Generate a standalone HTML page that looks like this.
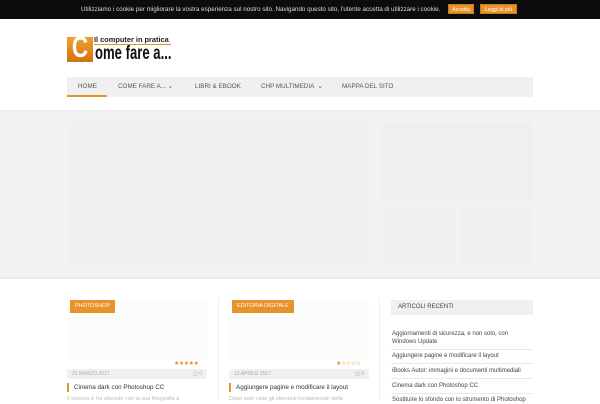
<!DOCTYPE html>
<html><head><meta charset="utf-8"><style>
*{margin:0;padding:0;box-sizing:border-box}
body{width:600px;height:400px;overflow:hidden;background:#fff;font-family:"Liberation Sans",sans-serif;position:relative}
.abs{position:absolute}
.cookie{left:0;top:0;width:600px;height:19px;background:#0c0c0c;color:#ddd;font-size:6.25px;line-height:19px;white-space:nowrap}
.btn{background:#e8922a;color:#fff;font-size:5.3px;height:10px;line-height:10px;top:4px;text-align:center;border:1px solid #c77a1f}
.nav{left:67px;top:77px;width:466px;height:20px;background:#f0f0f0;font-size:6.3px;color:#555}
.nav span{position:absolute;top:0;line-height:20px}
.band{left:0;top:110px;width:600px;height:169px;background:#f2f2f2;border-top:1px solid #eaeaea;border-bottom:2px solid #ebebeb}
.tag{background:#e8922a;color:#fff;font-size:5.5px;height:13px;line-height:13px;padding:0 5px}
.meta{height:10px;background:#f0f0f0;font-size:5px;color:#aaa;line-height:10px;padding-left:5px}
.title{font-size:6.3px;color:#333;border-left:2px solid #e8922a;padding-left:5px;height:9px;line-height:9px}
.side{font-size:6px;color:#444;line-height:8px}
.sep{height:1px;background:#e8e8e8;width:142px}
</style></head><body>
<div class="abs cookie"><span style="position:absolute;left:81px">Utilizziamo i cookie per migliorare la vostra esperienza sul nostro sito. Navigando questo sito, l'utente accetta di utilizzare i cookie.</span></div>
<div class="abs btn" style="left:448px;width:26px">Accetta</div>
<div class="abs btn" style="left:480px;width:37px">Leggi di più</div>

<div class="abs" style="left:67px;top:37px;width:26px;height:25px;background:linear-gradient(#f0a030,#d07510)"></div>
<div class="abs" style="left:67px;top:33px;width:26px;font:bold 30px/30px 'Liberation Sans',sans-serif;color:#fff;text-align:center;transform:scaleX(0.75)">C</div>
<div class="abs" style="left:94px;top:35px;font-size:7.4px;font-weight:bold;color:#222;white-space:nowrap">Il computer in pratica</div>
<div class="abs" style="left:94px;top:44px;width:77px;height:1px;background:#e8922a"></div>
<div class="abs" style="left:95px;top:44px;font:bold 19px/19px 'Liberation Sans',sans-serif;color:#111;transform:scaleX(0.69);transform-origin:left;white-space:nowrap">ome fare a...</div>

<div class="abs nav">
<span style="left:11px">HOME</span>
<span style="left:51px">COME FARE A... &#8964;</span>
<span style="left:128px">LIBRI &amp; EBOOK</span>
<span style="left:194px">CHP MULTIMEDIA &nbsp;&#8964;</span>
<span style="left:275px">MAPPA DEL SITO</span>
<div style="position:absolute;left:0;top:18px;width:40px;height:2px;background:#e8922a"></div>
</div>

<div class="abs band"></div>
<div class="abs" style="left:68px;top:122px;width:302px;height:144px;background:#f0f0f0"></div>
<div class="abs" style="left:382px;top:122px;width:151px;height:79px;background:#efefef"></div>
<div class="abs" style="left:382px;top:206px;width:73px;height:60px;background:#f0f0f0"></div>
<div class="abs" style="left:459px;top:206px;width:74px;height:60px;background:#f0f0f0"></div>

<div class="abs" style="left:67px;top:300px;width:140px;height:60px;background:#fcfcfc"></div>
<div class="abs" style="left:229px;top:300px;width:140px;height:60px;background:#fcfcfc"></div>
<div class="abs" style="left:218px;top:298px;width:1px;height:102px;background:#eee"></div>
<div class="abs" style="left:379px;top:298px;width:1px;height:102px;background:#eee"></div>

<div class="abs tag" style="left:70px;top:300px">PHOTOSHOP</div>
<div class="abs tag" style="left:232px;top:300px">EDITORIA DIGITALE</div>
<div class="abs" style="left:174px;top:360px;font-size:6px;color:#e8922a;letter-spacing:-0.5px">★★★★★</div>
<div class="abs" style="left:336px;top:360px;font-size:6px;color:#e8922a;letter-spacing:-0.5px">★☆☆☆☆</div>
<div class="abs meta" style="left:67px;top:369px;width:140px">21 MARZO 2017<span style="position:absolute;right:5px">&#9707; 0</span></div>
<div class="abs meta" style="left:229px;top:369px;width:140px">12 APRILE 2017<span style="position:absolute;right:5px">&#9707; 0</span></div>
<div class="abs title" style="left:67px;top:383px">Cinema dark con Photoshop CC</div>
<div class="abs title" style="left:229px;top:383px">Aggiungere pagine e modificare il layout</div>
<div class="abs" style="left:67px;top:396px;font-size:5.5px;color:#bbb">Il cinema si ha ottenuto con la sua fotografia a</div>
<div class="abs" style="left:229px;top:396px;font-size:5.5px;color:#bbb">Dopo aver visto gli elementi fondamentali della</div>

<div class="abs" style="left:391px;top:300px;width:142px;height:15px;background:#f0f0f0;font-size:6px;color:#444;line-height:15px;padding-left:7px">ARTICOLI RECENTI</div>
<div class="abs side" style="left:392px;top:330px">Aggiornamenti di sicurezza, e non solo, con<br>Windows Update</div>
<div class="abs sep" style="left:391px;top:349px"></div>
<div class="abs side" style="left:392px;top:352px">Aggiungere pagine e modificare il layout</div>
<div class="abs sep" style="left:391px;top:363px"></div>
<div class="abs side" style="left:392px;top:367px">iBooks Autor: immagini e documenti multimediali</div>
<div class="abs sep" style="left:391px;top:378px"></div>
<div class="abs side" style="left:392px;top:382px">Cinema dark con Photoshop CC</div>
<div class="abs sep" style="left:391px;top:393px"></div>
<div class="abs side" style="left:392px;top:396px">Sostituire lo sfondo con lo strumento di Photoshop</div>
</body></html>
